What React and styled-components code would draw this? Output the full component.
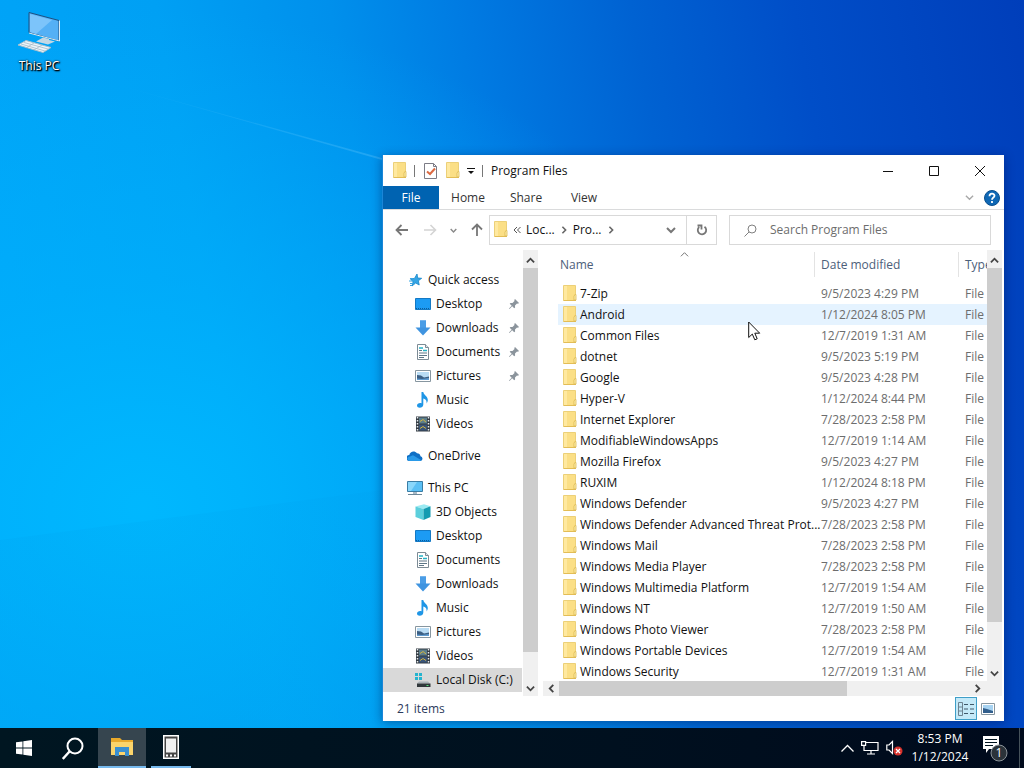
import React, {useState} from 'react';

import styled, {createGlobalStyle, css} from 'styled-components';

const GlobalStyle = createGlobalStyle`
  * {
    box-sizing: border-box;
  }

  body {
    margin: 0;
    font-family: 'Open Sans', 'Noto Sans', sans-serif;
    font-size: 12px;
    line-height: 16px;
    color: #111;
    overflow: hidden;
  }

  button, input {
    font: inherit;
    color: inherit;
  }

  button {
    padding: 0;
    border: 0;
    background: none;
  }

  svg {
    display: block;
    flex: none;
  }
`;

const Screen = styled.div`
  position: relative;
  display: flex;
  flex-direction: column;
  height: 100vh;
  background:
    radial-gradient(ellipse 60% 65% at 14% 66%, rgba(0, 186, 255, .9) 0%, rgba(0, 178, 252, .6) 45%, rgba(0, 160, 245, 0) 100%),
    linear-gradient(80deg, #00a6fa 0%, #00a0f4 25%, #0090ec 40%, #007ae2 52%, #0062d2 66%, #004ec8 80%, #003eba 100%);
`;

const Beams = styled.svg`
  position: absolute;
  width: 100%;
  height: 100%;
`;

const Desktop = styled.main`
  position: relative;
  flex: 1;
  min-height: 0;
`;

const Shortcut = styled.button`
  display: flex;
  flex-direction: column;
  align-items: center;
  gap: 4px;
  width: 78px;
  padding-top: 10px;
  color: #fff;
  text-shadow: 1px 1px 2px #000, 1px 1px 1px #000, 0 0 2px #000;
`;

const Window = styled.section`
  position: absolute;
  left: 382px;
  right: 20px;
  top: 155px;
  bottom: 7px;
  display: flex;
  flex-direction: column;
  background: #fff;
  border-left: 1px solid #1a86d8;
  box-shadow: 0 2px 10px rgba(0, 20, 80, .45);
`;

const TitleBar = styled.header`
  display: flex;
  align-items: center;
  height: 31px;
  padding: 0 1px 0 9px;
`;

const QuickTools = styled.div`
  display: flex;
  align-items: center;
  gap: 7px;
`;

const Separator = styled.span`
  width: 1px;
  height: 12px;
  background: #777;
`;

const Title = styled.h1`
  flex: 1;
  margin: 0 0 0 8px;
  font-size: 12px;
  font-weight: 400;
`;

const CaptionButton = styled.button`
  display: flex;
  align-items: center;
  justify-content: center;
  width: 46px;
  height: 31px;
`;

const Ribbon = styled.nav`
  display: flex;
  align-items: center;
  height: 24px;
  border-bottom: 1px solid #dadbdc;
`;

const RibbonTab = styled.button`
  width: 58px;
  height: 23px;
  color: #333;

  ${({$file}) => $file && css`
    width: 56px;
    color: #fff;
    background: #0063b1;
  `}
`;

const RibbonEnd = styled.div`
  display: flex;
  align-items: center;
  gap: 10px;
  margin-left: auto;
  padding-right: 4px;
`;

const NavBar = styled.div`
  display: flex;
  align-items: center;
  height: 40px;
  padding: 0 13px 0 12px;
`;

const NavButtons = styled.div`
  display: flex;
  align-items: center;
  justify-content: space-between;
  width: 88px;
  margin-right: 6px;
`;

const Address = styled.div`
  display: flex;
  align-items: center;
  flex: 1;
  height: 30px;
  padding-left: 3px;
  border: 1px solid #d9d9d9;
`;

const Crumbs = styled.div`
  display: flex;
  align-items: center;
  flex: 1;
  gap: 5px;
`;

const AddressButton = styled.button`
  display: flex;
  align-items: center;
  justify-content: center;
  width: 30px;
  height: 28px;
  border-left: ${({$line}) => $line ? '1px solid #d9d9d9' : '0'};
`;

const SearchBox = styled.label`
  display: flex;
  align-items: center;
  gap: 13px;
  width: 262px;
  height: 30px;
  margin-left: 12px;
  padding-left: 14px;
  border: 1px solid #d9d9d9;
`;

const SearchInput = styled.input`
  flex: 1;
  min-width: 0;
  padding: 0;
  border: 0;
  outline: 0;
  background: none;

  &::placeholder {
    color: #6d6d6d;
    opacity: 1;
  }
`;

const Body = styled.div`
  display: flex;
  flex: 1;
  min-height: 0;
`;

const Sidebar = styled.aside`
  width: 140px;
  padding-top: 18px;
  overflow: hidden;
`;

const TreeGroup = styled.div`
  margin-bottom: 8px;
`;

const TreeItem = styled.button`
  display: flex;
  align-items: center;
  gap: 5px;
  width: 139px;
  height: 24px;
  padding: 0 3px 0 ${({$root}) => $root ? '24px' : '32px'};
  text-align: left;
  white-space: nowrap;
  background: ${({$selected}) => $selected ? '#d9d9d9' : 'none'};
`;

const TreeLabel = styled.span`
  flex: 1;
`;

const ScrollTrack = styled.div`
  display: flex;
  flex-direction: ${({$horizontal}) => $horizontal ? 'row' : 'column'};
  flex: none;
  background: #f0f0f0;
  ${({$horizontal}) => $horizontal
    ? 'height: 15px; padding: 0 17px 0 1px;'
    : 'width: 15px; padding-top: 3px;'}
`;

const ScrollArrow = styled.button`
  display: flex;
  flex: none;
  align-items: center;
  justify-content: center;
  width: 15px;
  height: 15px;
`;

const ScrollLane = styled.div`
  display: flex;
  flex-direction: ${({$horizontal}) => $horizontal ? 'row' : 'column'};
  flex: 1;
`;

const ScrollThumb = styled.div`
  flex: 0 0 ${({$size}) => $size};
  background: #cdcdcd;
`;

const Main = styled.div`
  display: flex;
  flex-direction: column;
  flex: 1;
  min-width: 0;
  padding: 0 2px 0 5px;
`;

const ListArea = styled.div`
  display: flex;
  flex: 1;
  min-height: 0;
`;

const ListView = styled.div`
  flex: 1;
  min-width: 0;
  padding-left: 15px;
  overflow: hidden;
`;

const FileTable = styled.table`
  width: 520px;
  table-layout: fixed;
  border-collapse: collapse;
`;

const HeadCell = styled.th`
  position: relative;
  height: 33px;
  padding: 1px 0 5px ${({$first}) => $first ? '2px' : '7px'};
  font-weight: 400;
  text-align: left;
  color: #4c607a;
  background: ${({$first}) => $first
    ? 'none'
    : 'linear-gradient(#e3e3e3, #e3e3e3) 0 2px / 1px 25px no-repeat'};
`;

const SortMark = styled.span`
  position: absolute;
  top: 0;
  left: 122px;
`;

const Row = styled.tr`
  background: ${({$hover}) => $hover ? '#e5f3ff' : 'none'};
`;

const Cell = styled.td`
  height: 21px;
  padding: 0 0 0 7px;
  color: #6d6d6d;
  white-space: nowrap;
`;

const FileName = styled.div`
  display: flex;
  align-items: center;
  gap: 3px;
  margin-left: -3px;
  color: #111;
`;

const StatusBar = styled.footer`
  display: flex;
  align-items: center;
  height: 25px;
  padding: 0 5px 0 14px;
  color: #2b3a5c;
`;

const ViewButton = styled.button`
  display: flex;
  align-items: center;
  justify-content: center;
  width: 22px;
  height: 23px;
  border: ${({$active}) => $active ? '1px solid #3f9fc8' : '0'};
  background: ${({$active}) => $active ? '#c4e9f8' : 'none'};
`;

const Spacer = styled.span`
  flex: 1;
`;

const Pointer = styled.svg`
  position: absolute;
  left: 748px;
  top: 321px;
`;

const Taskbar = styled.footer`
  position: relative;
  display: flex;
  align-items: center;
  height: 40px;
  background: linear-gradient(90deg, #001621, #00101f 60%, #000a1c);
  color: #fff;
`;

const TaskButtons = styled.div`
  display: flex;
  gap: 1px;
`;

const TaskButton = styled.button`
  display: flex;
  align-items: center;
  justify-content: center;
  width: ${({$narrow}) => $narrow ? '40px' : '48px'};
  height: 40px;
  margin-right: ${({$active}) => $active ? '4px' : '0'};
  border-bottom: ${({$running}) => $running ? '2px solid #76b9ed' : '0'};
  background: ${({$active}) => $active ? '#36454f' : 'none'};
`;

const Tray = styled.div`
  display: flex;
  align-items: center;
  gap: 7px;
  margin-left: auto;
`;

const Clock = styled.time`
  width: 60px;
  line-height: 18px;
  text-align: center;
  white-space: nowrap;
`;

const TrayButton = styled.button`
  display: flex;
`;

const ShowDesktop = styled.button`
  width: 5px;
  height: 40px;
  border-left: 1px solid #46525a;
`;

const Chevron = ({dir = 'down', size = 9, color = '#444', weight = 2}) => {
  const paths = {
    up: 'M1 7 5 3l4 4',
    down: 'M1 3l4 4 4-4',
    left: 'M7 1 3 5l4 4',
    right: 'M3 1l4 4-4 4'
  };

  return (
    <svg width={size} height={size} viewBox="0 0 10 10" fill="none" stroke={color} strokeWidth={weight}>
      <path d={paths[dir]} />
    </svg>
  );
};

const FolderIcon = () => (
  <svg width="15" height="18" viewBox="0 0 15 18">
    <path d="M1.500.500h12v10l.5 1v4H1.500z" fill="#fbdf86" />
    <path d="M2 1h3v14H2z" fill="#ffe9a0" />
    <path d="M1.500 15.500v-15h12v9" fill="none" stroke="#ecd078" />
    <path d="M1.500 15.500H14" stroke="#e3bd55" />
    <path d="M12 15v-4l1.500-2 .5 1v5z" fill="#fff0ad" stroke="#dcb751" strokeWidth=".8" />
  </svg>
);

const MonitorIcon = () => (
  <svg width="16" height="16" viewBox="0 0 16 16">
    <path d="M.5 1.500h15v10H.5z" fill="#5bc0f5" stroke="#3a7da5" />
    <path d="M1 2h9l-6 9H1z" fill="#8ad7fb" />
    <path d="M6 12h4v2H6z" fill="#a9bac6" />
    <path d="M1 14.500h14" stroke="#6c8798" />
  </svg>
);

const icons = {
  star: (
    <svg width="16" height="16" viewBox="0 0 16 16">
      <path d="M10 2l.7 4 4 .3-3.300 2.400.8 4.300-3.500-2L5 14l1.100-4.200-2.600-2.900 4-.5z" fill="#35a5e5" stroke="#1787ca" strokeWidth=".8" />
      <path d="M3 6.500h3M2 9h4M3 11.500h3M3 13.500h2" stroke="#3ba7e4" />
    </svg>
  ),
  desktop: (
    <svg width="16" height="16" viewBox="0 0 16 16">
      <path d="M.5 2.500h15v11H.5z" fill="#1c9bf4" stroke="#1479c4" />
      <path d="M1 12.500h14" stroke="#0b5d9c" strokeDasharray="1 1" />
    </svg>
  ),
  downloads: (
    <svg width="16" height="16" viewBox="0 0 16 16">
      <path d="M5 .5h6v7h4.500L8 15.500.5 7.500H5z" fill="#3f94e0" />
      <path d="M5 .5h6v7H5z" fill="#4a9de6" />
    </svg>
  ),
  documents: (
    <svg width="16" height="16" viewBox="0 0 16 16">
      <path d="M2.500.5h8l3 3v12h-11z" fill="#fff" stroke="#7c8b95" />
      <path d="M10.500.5v3h3" fill="#dde5ea" stroke="#7c8b95" />
      <path d="M4 6.500h3M4 9h8M4 11.500h8M4 13.500h5" stroke="#5e7787" />
      <path d="M8 6.500h4M4 4h4" stroke="#25b2c6" strokeWidth="1.600" />
    </svg>
  ),
  pictures: (
    <svg width="16" height="16" viewBox="0 0 16 16">
      <path d="M.5 2.500h15v11H.5z" fill="#fff" stroke="#8796a0" />
      <path d="M2 4h12v8H2z" fill="#b9dcf4" />
      <path d="M2 7l4 .5 3 2 5-1V12H2z" fill="#3c5f84" />
      <path d="M2 10.500l5 .5 7-1v2H2z" fill="#5f9bd0" />
    </svg>
  ),
  music: (
    <svg width="16" height="16" viewBox="0 0 16 16">
      <path d="M6.500 0h1.800c.2 3 4.500 4 4.500 8 0 1.400-.7 2.700-1.300 3.400.5-2.900-1-4.200-3.200-4.800v6c0 4-6.300 4.200-6.300 1 0-2.200 2.400-3 4.500-2.400z" fill="#1f96e6" />
    </svg>
  ),
  videos: (
    <svg width="16" height="16" viewBox="0 0 16 16">
      <path d="M1 .5h14v15H1z" fill="#333b43" />
      <path d="M4 1.500h8v6H4z" fill="#5d7f8c" />
      <path d="M4 8.500h8v6H4z" fill="#3a5579" />
      <path d="M5 5.500l3-2 3 2.500M5 12.500l3-2 3 2" fill="none" stroke="#d2b440" />
      <path d="M2.500 1v14M13.500 1v14" stroke="#e8ecef" strokeWidth="1.500" strokeDasharray="1.500 1.500" />
    </svg>
  ),
  cloud: (
    <svg width="16" height="16" viewBox="0 0 16 16">
      <path d="M2.500 13a3 3 0 0 1-.2-6C3 3.500 7.500 2 10 5.300c2 0 3.200 1.200 3.500 3A2.400 2.400 0 0 1 13.600 13z" fill="#0f6fc5" />
      <path d="M3 13c-3.500-.6-3.500-4 0-4.500l3-1.200L14 12c0 .5-.5 1-1.500 1z" fill="#2a9ae8" />
    </svg>
  ),
  pc: <MonitorIcon />,
  cube: (
    <svg width="16" height="16" viewBox="0 0 16 16">
      <path d="M.5 2.500 9 .3l6.500 2L8.500 5z" fill="#9beaf2" />
      <path d="M.5 2.500l8 2.500v11l-8-3z" fill="#5ccfdc" />
      <path d="M8.500 5l7-2.700V13l-7 3z" fill="#159bb1" />
    </svg>
  ),
  disk: (
    <svg width="16" height="16" viewBox="0 0 16 16">
      <path d="M0 1h3v3H0zM4 1h3v3H4zM0 5h3v3H0zM4 5h3v3H4z" fill="#25b4cf" />
      <path d="M4 9.500h9l2 2H2z" fill="#aab2b7" />
      <path d="M2 11.500h13.500V15H2z" fill="#30373b" />
      <path d="M11.500 13.500h2" stroke="#53e07a" />
    </svg>
  )
};

const PinIcon = () => (
  <svg width="10" height="10" viewBox="0 0 10 10">
    <path d="M6 0l4 4-1 .7-1-.2-2 2 .1 2-.9.8L3.200 7.300.5 10 0 9.500l2.700-2.700L.7 4.800l.8-.9 2 .1 2-2L5.300 1z" fill="#8b949c" />
  </svg>
);

const treeGroups = [
  [
    {label: 'Quick access', icon: 'star', root: true},
    {label: 'Desktop', icon: 'desktop', pinned: true},
    {label: 'Downloads', icon: 'downloads', pinned: true},
    {label: 'Documents', icon: 'documents', pinned: true},
    {label: 'Pictures', icon: 'pictures', pinned: true},
    {label: 'Music', icon: 'music'},
    {label: 'Videos', icon: 'videos'}
  ],
  [
    {label: 'OneDrive', icon: 'cloud', root: true}
  ],
  [
    {label: 'This PC', icon: 'pc', root: true},
    {label: '3D Objects', icon: 'cube'},
    {label: 'Desktop', icon: 'desktop'},
    {label: 'Documents', icon: 'documents'},
    {label: 'Downloads', icon: 'downloads'},
    {label: 'Music', icon: 'music'},
    {label: 'Pictures', icon: 'pictures'},
    {label: 'Videos', icon: 'videos'},
    {label: 'Local Disk (C:)', icon: 'disk', selected: true}
  ]
];

const files = [
  ['7-Zip', '9/5/2023 4:29 PM'],
  ['Android', '1/12/2024 8:05 PM'],
  ['Common Files', '12/7/2019 1:31 AM'],
  ['dotnet', '9/5/2023 5:19 PM'],
  ['Google', '9/5/2023 4:28 PM'],
  ['Hyper-V', '1/12/2024 8:44 PM'],
  ['Internet Explorer', '7/28/2023 2:58 PM'],
  ['ModifiableWindowsApps', '12/7/2019 1:14 AM'],
  ['Mozilla Firefox', '9/5/2023 4:27 PM'],
  ['RUXIM', '1/12/2024 8:18 PM'],
  ['Windows Defender', '9/5/2023 4:27 PM'],
  ['Windows Defender Advanced Threat Prot...', '7/28/2023 2:58 PM'],
  ['Windows Mail', '7/28/2023 2:58 PM'],
  ['Windows Media Player', '7/28/2023 2:58 PM'],
  ['Windows Multimedia Platform', '12/7/2019 1:54 AM'],
  ['Windows NT', '12/7/2019 1:50 AM'],
  ['Windows Photo Viewer', '7/28/2023 2:58 PM'],
  ['Windows Portable Devices', '12/7/2019 1:54 AM'],
  ['Windows Security', '12/7/2019 1:31 AM']
];

const ScrollBar = ({horizontal, size}) => (
  <ScrollTrack $horizontal={horizontal}>
    <ScrollArrow aria-label="Scroll back">
      <Chevron dir={horizontal ? 'left' : 'up'} />
    </ScrollArrow>
    <ScrollLane $horizontal={horizontal}>
      <ScrollThumb $size={size} />
    </ScrollLane>
    <ScrollArrow aria-label="Scroll forward">
      <Chevron dir={horizontal ? 'right' : 'down'} />
    </ScrollArrow>
  </ScrollTrack>
);

const WindowTitle = () => (
  <TitleBar>
    <QuickTools>
      <FolderIcon />
      <Separator />
      <button aria-label="Properties">
        <svg width="16" height="16" viewBox="0 0 16 16">
          <path d="M2.500.5h9l3 3v12h-12z" fill="#fff" stroke="#7c7c86" />
          <path d="M11.500.5v3h3" fill="none" stroke="#7c7c86" />
          <path d="M5 8.500 8 11l5-5.500" fill="none" stroke="#dc6a43" strokeWidth="2" />
        </svg>
      </button>
      <button aria-label="New folder"><FolderIcon /></button>
      <button aria-label="Customize">
        <svg width="8" height="8" viewBox="0 0 8 8">
          <path d="M0 1.500h8" stroke="#111" />
          <path d="M1 4h6L4 7z" fill="#111" />
        </svg>
      </button>
      <Separator />
    </QuickTools>
    <Title>Program Files</Title>
    <CaptionButton aria-label="Minimize">
      <svg width="10" height="10" viewBox="0 0 10 10"><path d="M0 5.500h10" stroke="#111" /></svg>
    </CaptionButton>
    <CaptionButton aria-label="Maximize">
      <svg width="10" height="10" viewBox="0 0 10 10"><path d="M.5.5h9v9h-9z" fill="none" stroke="#111" /></svg>
    </CaptionButton>
    <CaptionButton aria-label="Close">
      <svg width="10" height="10" viewBox="0 0 10 10"><path d="M0 0l10 10M10 0 0 10" stroke="#111" /></svg>
    </CaptionButton>
  </TitleBar>
);

const WindowRibbon = () => (
  <Ribbon>
    <RibbonTab $file>File</RibbonTab>
    <RibbonTab>Home</RibbonTab>
    <RibbonTab>Share</RibbonTab>
    <RibbonTab>View</RibbonTab>
    <RibbonEnd>
      <Chevron color="#a8a8a8" weight={1.5} />
      <button aria-label="Help">
        <svg width="16" height="16" viewBox="0 0 16 16">
          <circle cx="8" cy="8" r="7.500" fill="#0f68b5" stroke="#0a4f8e" />
          <path d="M5.500 6.200c0-3.400 5-3.200 5-.4C10.500 7.600 8 7.600 8 9.800M8 11v2" fill="none" stroke="#fff" strokeWidth="1.800" />
        </svg>
      </button>
    </RibbonEnd>
  </Ribbon>
);

const WindowNav = () => {
  const [query, setQuery] = useState('');

  return (
    <NavBar>
      <NavButtons>
        <button aria-label="Back">
          <svg width="14" height="12" viewBox="0 0 14 12" fill="none" stroke="#777" strokeWidth="1.800">
            <path d="M13 6H2M6.500 1l-5 5 5 5" />
          </svg>
        </button>
        <button aria-label="Forward">
          <svg width="14" height="12" viewBox="0 0 14 12" fill="none" stroke="#d4d4d4" strokeWidth="1.600">
            <path d="M1 6h11M7.500 1l5 5-5 5" />
          </svg>
        </button>
        <button aria-label="Recent locations"><Chevron size={7} color="#888" /></button>
        <button aria-label="Up">
          <svg width="12" height="14" viewBox="0 0 12 14" fill="none" stroke="#777" strokeWidth="1.800">
            <path d="M6 13V2M1 6.500l5-5 5 5" />
          </svg>
        </button>
      </NavButtons>
      <Address>
        <Crumbs>
          <FolderIcon />
          <svg width="8" height="8" viewBox="0 0 8 8" fill="none" stroke="#555">
            <path d="M4 1 1 4l3 3M7.500 1l-3 3 3 3" />
          </svg>
          <span>Loc...</span>
          <Chevron dir="right" size={8} color="#666" />
          <span>Pro...</span>
          <Chevron dir="right" size={8} color="#666" />
        </Crumbs>
        <AddressButton aria-label="Previous locations">
          <Chevron size={10} color="#777" />
        </AddressButton>
        <AddressButton $line aria-label="Refresh">
          <svg width="12" height="12" viewBox="0 0 12 12" fill="none" stroke="#777" strokeWidth="1.800">
            <path d="M8.500 2.800A4.200 4.200 0 1 1 3.200 3M1.500 1.500h4v4" />
          </svg>
        </AddressButton>
      </Address>
      <SearchBox>
        <svg width="13" height="13" viewBox="0 0 13 13" fill="none" stroke="#808080">
          <circle cx="8" cy="5" r="4" />
          <path d="M5 8 .5 12.500" />
        </svg>
        <SearchInput
          aria-label="Search Program Files"
          placeholder="Search Program Files"
          value={query}
          onChange={e => setQuery(e.target.value)}
        />
      </SearchBox>
    </NavBar>
  );
};

const FileList = () => (
  <FileTable>
    <colgroup>
      <col width="256" />
      <col width="144" />
      <col width="120" />
    </colgroup>
    <thead>
      <tr>
        <HeadCell $first>
          Name
          <SortMark><Chevron dir="up" size={9} color="#666" weight={1} /></SortMark>
        </HeadCell>
        <HeadCell>Date modified</HeadCell>
        <HeadCell>Type</HeadCell>
      </tr>
    </thead>
    <tbody>
      {files.map(([name, date]) => (
        <Row key={name} $hover={name === 'Android'}>
          <Cell>
            <FileName>
              <FolderIcon />
              {name}
            </FileName>
          </Cell>
          <Cell>{date}</Cell>
          <Cell>File</Cell>
        </Row>
      ))}
    </tbody>
  </FileTable>
);

const Explorer = () => (
  <Window>
    <WindowTitle />
    <WindowRibbon />
    <WindowNav />
    <Body>
      <Sidebar>
        {treeGroups.map(group => (
          <TreeGroup key={group[0].label}>
            {group.map(item => (
              <TreeItem key={item.label} $root={item.root} $selected={item.selected}>
                {icons[item.icon]}
                <TreeLabel>{item.label}</TreeLabel>
                {item.pinned && <PinIcon />}
              </TreeItem>
            ))}
          </TreeGroup>
        ))}
      </Sidebar>
      <ScrollBar size="93%" />
      <Main>
        <ListArea>
          <ListView>
            <FileList />
          </ListView>
          <ScrollBar size="89%" />
        </ListArea>
        <ScrollBar horizontal size="70%" />
      </Main>
    </Body>
    <StatusBar>
      21 items
      <Spacer />
      <ViewButton $active aria-label="Details">
        <svg width="16" height="14" viewBox="0 0 16 14" fill="none" stroke="#6c8290">
          <path d="M.5.5h4v13h-4zM.5 5h4M.5 9h4" />
          <path d="M6 2.500h4M12 2.500h4M6 7h4M12 7h4M6 11.500h4M12 11.500h4" stroke="#40596a" />
        </svg>
      </ViewButton>
      <ViewButton aria-label="Large icons">
        <svg width="14" height="12" viewBox="0 0 14 12">
          <path d="M.5.5h13v11H.5z" fill="#fff" stroke="#8796a0" />
          <path d="M2 2h10v8H2z" fill="#a7d3f2" />
          <path d="M2 5l4 1 6 2v2H2z" fill="#315e8c" />
        </svg>
      </ViewButton>
    </StatusBar>
  </Window>
);

const ThisPcShortcut = () => (
  <Shortcut>
    <svg width="44" height="44" viewBox="0 0 44 44">
      <path d="M12 2.500 42 10.500v20.500L12 22.500z" fill="#54b0f5" stroke="#1d4f80" />
      <path d="M13 4l22 6L19 24l-6-2z" fill="#7cc4fa" />
      <path d="M42.500 10.500v20.500L12 23" fill="none" stroke="#d9edf8" />
      <path d="M26 27.500l6 1.500v1l6 1.500-7 3-12-3z" fill="#c4d8e4" />
      <path d="M1 35l8-4.500L34 37.500l-8 5z" fill="#edf5fa" stroke="#a5bfce" />
      <path d="M4 34l24 7M7 32.500l24 6.500M9 38l8-5M17 40l8-5" stroke="#a5bac6" strokeWidth=".8" />
    </svg>
    This PC
  </Shortcut>
);

const WindowsTaskbar = () => (
  <Taskbar>
    <TaskButtons>
      <TaskButton aria-label="Start">
        <svg width="16" height="16" viewBox="0 0 16 16" fill="#fff">
          <path d="M0 2.300 6.500 1.400v6.200H0zM7.300 1.300 16 0v7.600H7.300zM0 8.400h6.500v6.200L0 13.700zM7.300 8.400H16V16l-8.700-1.300z" />
        </svg>
      </TaskButton>
      <TaskButton aria-label="Search">
        <svg width="23" height="23" viewBox="0 0 23 23" fill="none" stroke="#fff" strokeWidth="2">
          <circle cx="13" cy="9" r="7.500" />
          <path d="M7.500 14.500.8 22" strokeWidth="2.400" />
        </svg>
      </TaskButton>
      <TaskButton $active $running aria-label="File Explorer">
        <svg width="22" height="18" viewBox="0 0 22 18">
          <path d="M0 0h9l2 2h11v15H0z" fill="#e9a92b" />
          <path d="M0 4h22v13H0z" fill="#fbd46b" />
          <path d="M4 9h14v9h-4v-4H8v4H4z" fill="#3a8fd0" />
        </svg>
      </TaskButton>
      <TaskButton $narrow $running aria-label="Phone">
        <svg width="16" height="24" viewBox="0 0 16 24">
          <path d="M0 0h16v24H0z" fill="#fff" />
          <path d="M1.500 1.500h13v21h-13z" fill="#444" />
          <path d="M3 3.500h10v14H3z" fill="#f1f1f1" />
          <path d="M3 20.500h2M7 20.500h2M11 20.500h2" stroke="#fff" strokeWidth="2" />
        </svg>
      </TaskButton>
    </TaskButtons>
    <Tray>
      <TrayButton aria-label="Show hidden icons">
        <svg width="13" height="8" viewBox="0 0 13 8" fill="none" stroke="#fff" strokeWidth="1.300">
          <path d="M.5 7.500l6-6 6 6" />
        </svg>
      </TrayButton>
      <TrayButton aria-label="Network">
        <svg width="18" height="14" viewBox="0 0 18 14" fill="none" stroke="#fff" strokeWidth="1.200">
          <path d="M5 1.500h12v8H3V5M10 9.500V13M6 13h8" />
          <path d="M.6.6h4v3.800h-4z" />
        </svg>
      </TrayButton>
      <TrayButton aria-label="Volume">
        <svg width="17" height="16" viewBox="0 0 17 16" fill="none">
          <path d="M6.500 1.500v12L3 10H.8V5H3z" stroke="#fff" strokeWidth="1.200" />
          <circle cx="12" cy="11" r="4.500" fill="#d8322c" />
          <path d="M10 9l4 4M14 9l-4 4" stroke="#fff" strokeWidth="1.300" />
        </svg>
      </TrayButton>
      <Clock>8:53 PM<br />1/12/2024</Clock>
      <TrayButton aria-label="Notifications">
        <svg width="35" height="28" viewBox="3 0 35 28">
          <path d="M9 2h16v13H15l-3 4v-4H9z" fill="#fff" />
          <path d="M11 5.500h12M11 8.500h12M11 11.500h8" stroke="#00131f" />
          <circle cx="25" cy="19" r="8" fill="#2b333a" stroke="#8b9399" />
          <text x="25" y="23" fill="#fff" fontSize="12" textAnchor="middle">1</text>
        </svg>
      </TrayButton>
      <ShowDesktop aria-label="Show desktop" />
    </Tray>
  </Taskbar>
);

const App = () => (
  <Screen>
    <GlobalStyle />
    <Beams viewBox="0 0 1024 768" preserveAspectRatio="none">
      <defs>
        <linearGradient id="beam" x1="0" x2="1">
          <stop offset="0" stopColor="#8ad8ff" stopOpacity="0" />
          <stop offset="1" stopColor="#8ad8ff" stopOpacity=".25" />
        </linearGradient>
        <linearGradient id="haze" x1="0" y1="0" x2="0" y2="1">
          <stop offset="0" stopColor="#0098e6" stopOpacity=".2" />
          <stop offset="1" stopColor="#0098e6" stopOpacity=".4" />
        </linearGradient>
      </defs>
      <path d="M100 80 382 158v2z" fill="url(#beam)" />
      <path d="M0 540 382 490v238H0z" fill="url(#haze)" opacity=".5" />
    </Beams>
    <Desktop>
      <ThisPcShortcut />
      <Explorer />
      <Pointer width="13" height="20" viewBox="0 0 13 20">
        <path d="M.7 1v15.500l3.600-3.400 2.500 5.700 2.400-1-2.400-5.600h4.900z" fill="#fff" stroke="#111" />
      </Pointer>
    </Desktop>
    <WindowsTaskbar />
  </Screen>
);

export default App;
